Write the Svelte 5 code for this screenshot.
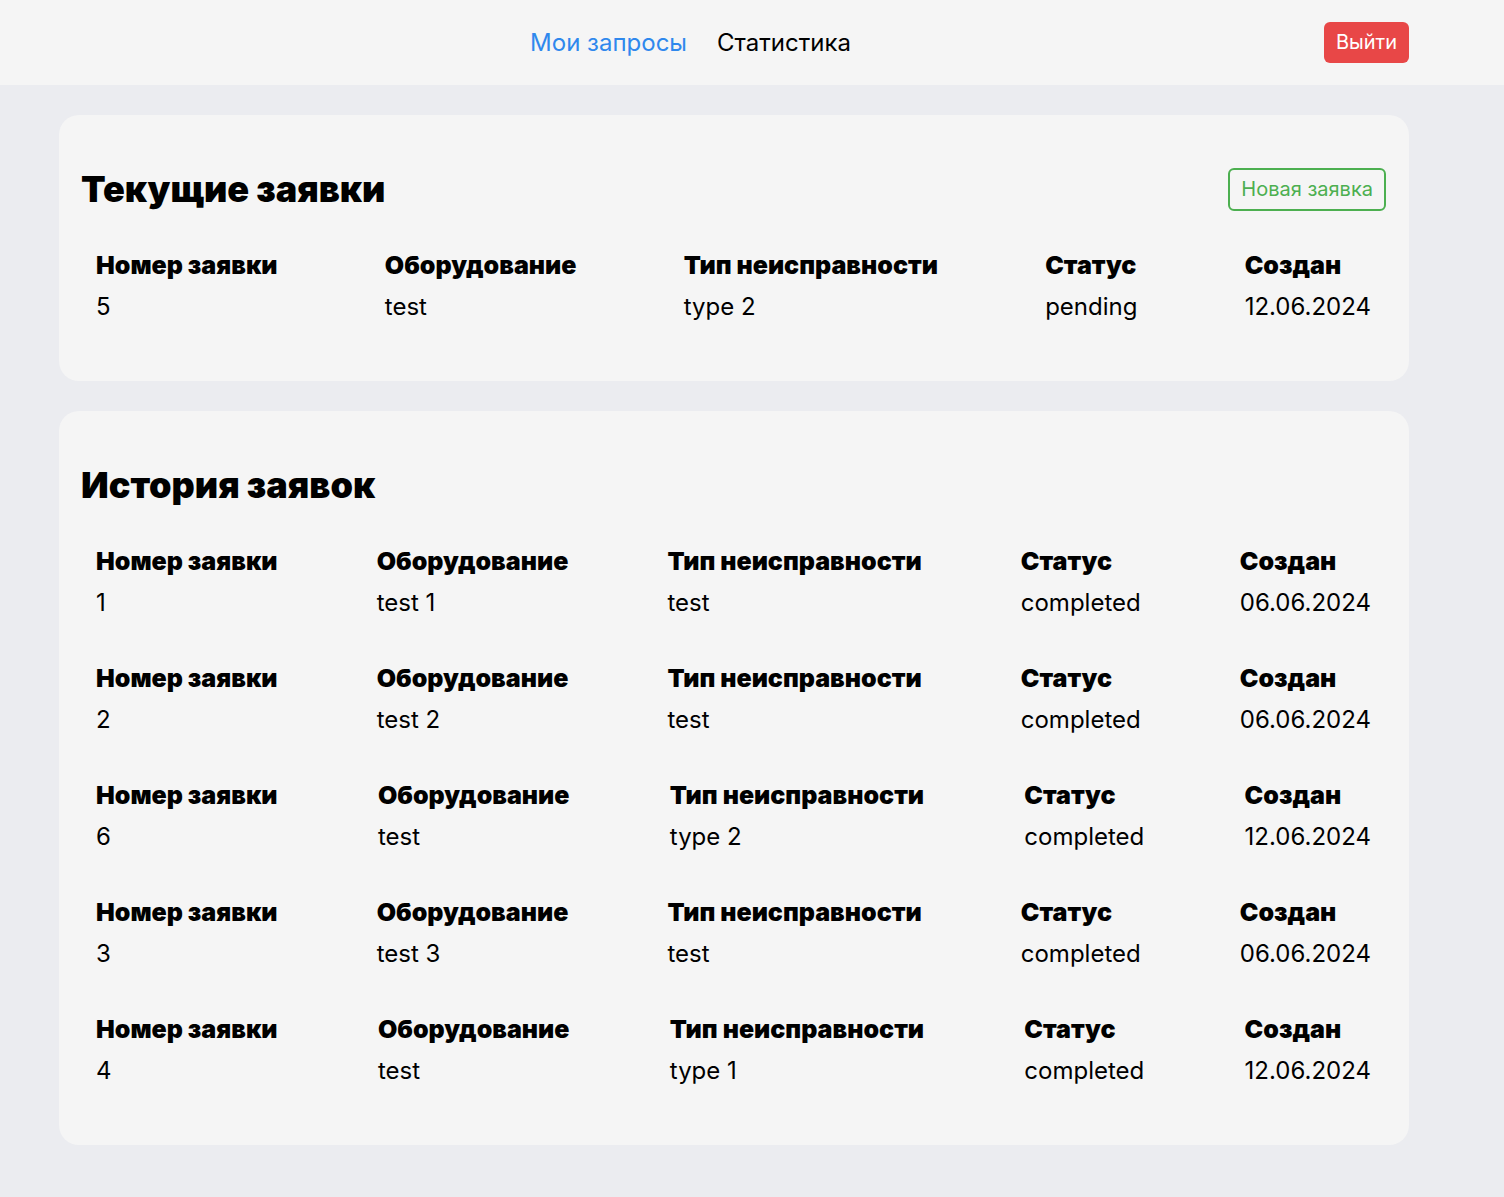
<script>
  const current = [{ id: 5, equipment: 'test', fault: 'type 2', status: 'pending', created: '12.06.2024' }];
  const history = [
    { id: 1, equipment: 'test 1', fault: 'test', status: 'completed', created: '06.06.2024' },
    { id: 2, equipment: 'test 2', fault: 'test', status: 'completed', created: '06.06.2024' },
    { id: 6, equipment: 'test', fault: 'type 2', status: 'completed', created: '12.06.2024' },
    { id: 3, equipment: 'test 3', fault: 'test', status: 'completed', created: '06.06.2024' },
    { id: 4, equipment: 'test', fault: 'type 1', status: 'completed', created: '12.06.2024' }
  ];
  const fields = [
    ['id', 'Номер заявки'],
    ['equipment', 'Оборудование'],
    ['fault', 'Тип неисправности'],
    ['status', 'Статус'],
    ['created', 'Создан']
  ];
</script>

{#snippet request(item)}
  <li>
    <dl class="request">
      {#each fields as [key, label]}
        <div class="field">
          <dt>{label}</dt>
          <dd>{item[key]}</dd>
        </div>
      {/each}
    </dl>
  </li>
{/snippet}

<header class="topbar">
  <div class="topbar-inner">
    <nav>
      <a class="active" href="#requests" aria-current="page">Мои запросы</a>
      <a href="#statistics">Статистика</a>
    </nav>
    <button class="logout" type="button">Выйти</button>
  </div>
</header>

<main>
  <section class="card">
    <div class="card-head">
      <h1>Текущие заявки</h1>
      <button class="create" type="button">Новая заявка</button>
    </div>
    <ul>
      {#each current as item}{@render request(item)}{/each}
    </ul>
  </section>

  <section class="card">
    <div class="card-head">
      <h1>История заявок</h1>
    </div>
    <ul>
      {#each history as item}{@render request(item)}{/each}
    </ul>
  </section>
</main>

<style>
  :global(body) {
    background: #ebecf0;
    color: #000;
    font-family: Inter, 'Liberation Sans', sans-serif;
    font-size: 24px;
    line-height: 30px;
  }
  .topbar {
    background: #f5f5f5;
  }
  .topbar-inner {
    display: grid;
    grid-template-columns: 1fr auto 1fr;
    align-items: center;
    padding: 22px 95px 22px 0;
    margin-left: -28px;
  }
  nav {
    grid-column: 2;
    display: flex;
    gap: 30px;
  }
  nav a {
    color: inherit;
    text-decoration: none;
  }
  nav a.active {
    color: #2f88ed;
  }
  button {
    font-family: inherit;
    font-size: 20px;
    line-height: 25px;
    border-radius: 6px;
    cursor: pointer;
  }
  .logout {
    justify-self: end;
    padding: 8px 12px;
    border: 0;
    background: #e84747;
    color: #fff;
  }
  .create {
    padding: 7px 11px;
    border: 2px solid #4caf50;
    background: transparent;
    color: #4caf50;
  }
  main {
    display: flex;
    flex-direction: column;
    gap: 30px;
    padding: 30px 95px 52px 59px;
  }
  .card {
    background: #f5f5f5;
    border-radius: 20px;
    padding: 48px 23px 37px 22px;
  }
  .card-head {
    display: flex;
    justify-content: space-between;
    align-items: center;
    min-height: 52px;
    margin-bottom: 12px;
  }
  h1 {
    margin: 0;
    font-size: 36px;
    line-height: 45px;
    font-weight: 900;
  }
  ul {
    list-style: none;
    margin: 0;
    padding: 0;
  }
  .request {
    display: flex;
    justify-content: space-between;
    margin: 0;
    padding: 23px 15px 22px;
  }
  .field {
    display: flex;
    flex-direction: column;
    gap: 12px;
  }
  dt {
    font-size: 25px;
    font-weight: 900;
  }
  dd {
    margin: 0;
  }
</style>
